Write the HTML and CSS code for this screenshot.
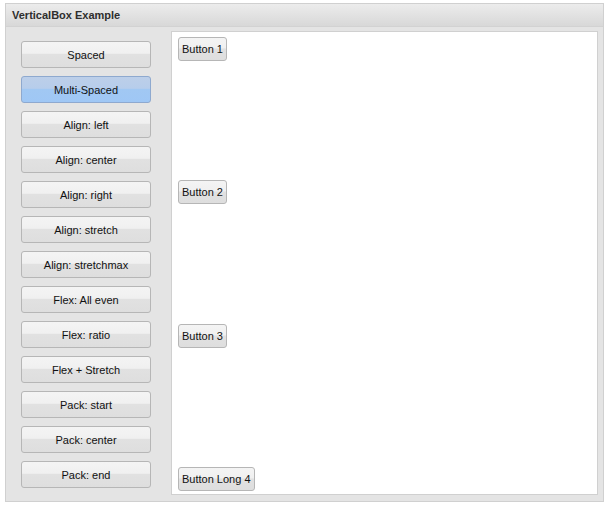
FILE: index.html
```html
<!DOCTYPE html>
<html>
<head>
  <title>VerticalBox Example</title>
  <link rel="stylesheet" href="styles.css">
</head>
<body>
  <!-- Window panel -->
  <div class="panel">
    <div class="panel-header">VerticalBox Example</div>
    <div class="panel-body">
      <!-- Layout switches -->
      <div class="menu">
        <button class="btn menu-btn">Spaced</button>
        <button class="btn menu-btn pressed">Multi-Spaced</button>
        <button class="btn menu-btn">Align: left</button>
        <button class="btn menu-btn">Align: center</button>
        <button class="btn menu-btn">Align: right</button>
        <button class="btn menu-btn">Align: stretch</button>
        <button class="btn menu-btn">Align: stretchmax</button>
        <button class="btn menu-btn">Flex: All even</button>
        <button class="btn menu-btn">Flex: ratio</button>
        <button class="btn menu-btn">Flex + Stretch</button>
        <button class="btn menu-btn">Pack: start</button>
        <button class="btn menu-btn">Pack: center</button>
        <button class="btn menu-btn">Pack: end</button>
      </div>
      <!-- Vbox content -->
      <div class="vbox">
        <button class="btn small-btn">Button 1</button>
        <button class="btn small-btn">Button 2</button>
        <button class="btn small-btn">Button 3</button>
        <button class="btn small-btn">Button Long 4</button>
      </div>
    </div>
  </div>
</body>
</html>
```

FILE: styles.css
```css
body {
  font-family: "Liberation Sans", Arial, sans-serif;
  margin: 0;
  padding: 0;
  background-color: #fff;
}

.panel {
  width: 597px;
  margin: 3px 0 0 5px;
  border: 1px solid #d0d0d0;
  background-color: #e4e4e4;
}

.panel-header {
  height: 22px;
  line-height: 22px;
  padding-left: 6px;
  font-size: 11px;
  font-weight: bold;
  color: #2e2e2e;
  background: linear-gradient(#ececec, #d8d8d8);
  border-bottom: 1px solid #d2d2d2;
}

.panel-body {
  display: flex;
  align-items: flex-start;
  padding: 4px 5px 6px 15px;
}

.menu {
  display: flex;
  flex-direction: column;
  gap: 8px;
  margin-top: 10px;
  width: 130px;
}

.btn {
  font-family: "Liberation Sans", Arial, sans-serif;
  font-size: 11px;
  color: #111;
  border: 1px solid #b6b6b6;
  border-radius: 3px;
  background: linear-gradient(#f4f4f4 0%, #f0f0f0 45%, #e1e1e1 50%, #dedede 100%);
  padding: 0;
  margin: 0;
  cursor: pointer;
}

.menu-btn {
  height: 27px;
  width: 130px;
}

.menu-btn.pressed {
  border-color: #8ea9cf;
  background: linear-gradient(#bccfe9 0%, #b7cdeb 45%, #a1c8f3 50%, #9fc7f5 100%);
}

.vbox {
  display: flex;
  flex-direction: column;
  justify-content: space-between;
  align-items: flex-start;
  margin-left: 20px;
  width: 420px;
  height: 454px;
  padding: 5px 6px 3px 6px;
  background-color: #fff;
  border: 1px solid #d0d0d0;
}

.small-btn {
  height: 24px;
  padding: 0 3px;
}
```
